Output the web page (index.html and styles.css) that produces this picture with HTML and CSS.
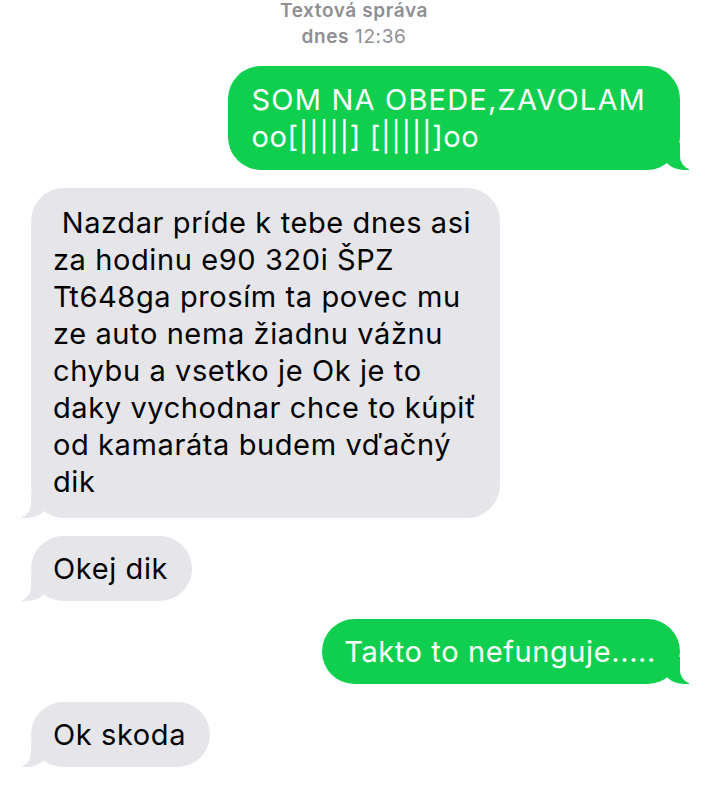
FILE: index.html
```html
<!DOCTYPE html>
<html lang="sk">
<head>
<meta charset="utf-8">
<title>Textová správa</title>
<link rel="stylesheet" href="styles.css">
</head>
<body>
<header class="meta">
  <div class="meta-title">Textová správa</div>
  <div class="meta-time"><span class="meta-day">dnes</span> 12:36</div>
</header>
<main class="thread">
  <p class="msg out two"><span class="caps">SOM NA OBEDE,ZAVOLAM</span><br>oo[|||||] [|||||]oo</p>
  <p class="msg in long">&nbsp;Nazdar príde k tebe dnes asi<br>za hodinu e90 320i ŠPZ<br>Tt648ga prosím ta povec mu<br>ze auto nema žiadnu vážnu<br>chybu a vsetko je Ok je to<br>daky vychodnar chce to kúpiť<br>od kamaráta budem vďačný<br>dik</p>
  <p class="msg in">Okej dik</p>
  <p class="msg out">Takto to nefunguje.....</p>
  <p class="msg in">Ok skoda</p>
</main>
</body>
</html>
```
FILE: styles.css
```css
html, body {
  margin: 0;
  padding: 0;
  background: #ffffff;
}

body {
  width: 708px;
  font-family: Inter, "Liberation Sans", Arial, sans-serif;
  overflow: hidden;
}

.meta {
  margin-top: -2px;
  text-align: center;
  color: #8e8e93;
  font-size: 19px;
  line-height: 26px;
  letter-spacing: 0.6px;
}

.meta-title,
.meta-day {
  font-weight: 600;
}

.meta-time {
  font-weight: 400;
}

.thread {
  display: flex;
  flex-direction: column;
  gap: 18px;
  padding: 16px 28px 40px 31px;
}

.msg {
  position: relative;
  margin: 0;
  padding: 14px 24px 14px 22px;
  font-size: 29px;
  line-height: 37px;
  letter-spacing: 0.6px;
  border-radius: 33px;
  white-space: nowrap;
}

.msg.out {
  align-self: flex-end;
  background: #10cf4f;
  color: #ffffff;
}

.msg.in {
  align-self: flex-start;
  background: #e5e5ea;
  color: #000000;
}

.msg.two {
  padding: 15px 34px 15px 23px;
}

.msg.long {
  padding-top: 16px;
  padding-bottom: 18px;
}

.caps {
  letter-spacing: 1.2px;
}

.msg::before,
.msg::after {
  content: "";
  position: absolute;
  bottom: 0;
  height: 27px;
}

.msg.out::before {
  right: -9px;
  border-right: 27px solid #10cf4f;
  border-bottom-left-radius: 22px 19px;
}

.msg.out::after {
  right: -17px;
  width: 17px;
  background: #ffffff;
  border-bottom-left-radius: 14px;
}

.msg.in::before {
  left: -9px;
  border-left: 27px solid #e5e5ea;
  border-bottom-right-radius: 22px 19px;
}

.msg.in::after {
  left: -17px;
  width: 17px;
  background: #ffffff;
  border-bottom-right-radius: 14px;
}
```
